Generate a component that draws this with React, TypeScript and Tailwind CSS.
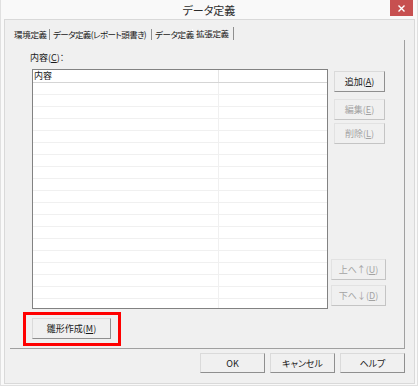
import React from 'react'

const font = "font-['Noto_Sans_CJK_JP','Noto_Sans',sans-serif] [font-feature-settings:'palt']"

function Btn({
  children,
  disabled,
  className = '',
}: {
  children: React.ReactNode
  disabled?: boolean
  className?: string
}) {
  const tone = disabled
    ? 'border-t-[#e2e2e2] border-l-[#e2e2e2] border-r-[#c4c4c4] border-b-[#c4c4c4] text-[#a3a3a3]'
    : 'border-t-[#dadada] border-l-[#dadada] border-r-[#8f8f8f] border-b-[#8f8f8f] text-[#1a1a1a]'
  return (
    <div
      className={`flex items-center justify-center border bg-[#f0f0f0] text-[9px] leading-none ${tone} ${className}`}
    >
      {children}
    </div>
  )
}

const rows = Array.from({ length: 19 })

export default function App() {
  return (
    <div
      className={`relative w-[418px] h-[386px] bg-[#f9f9f9] border-l border-r border-b border-[#e0e0e0] flex flex-col ${font}`}
    >
      {/* title bar */}
      <div className="h-[19px] flex items-center justify-center text-[11px] text-[#2b2b2b] leading-none pt-[2px]">
        データ定義
      </div>
      <div className="absolute right-[4px] top-0 w-[23px] h-[16px] bg-[#c75050] flex items-center justify-center">
        <svg width="7" height="7" viewBox="0 0 7 7">
          <path d="M0.5 0.5 L6.5 6.5 M6.5 0.5 L0.5 6.5" stroke="#fff" strokeWidth="1.4" />
        </svg>
      </div>

      {/* client area */}
      <div className="ml-[3px] w-[411px] h-[365px] border border-[#d9d9d9] bg-[#f0f0f0] flex flex-col">
        {/* tabs */}
        <div className="h-[20px] pl-[5px] flex items-end text-[8.5px] text-[#1a1a1a] leading-none">
          <div className="w-[40px] h-[11px] pl-[4px] border-r border-[#8f8f8f] flex items-center whitespace-nowrap tracking-[-0.3px]">
            環境定義
          </div>
          <div className="w-[102px] h-[11px] pl-[3px] border-r border-[#8f8f8f] flex items-center whitespace-nowrap tracking-[-0.6px]">
            データ定義(レポート頭書き)
          </div>
          <div className="w-[41px] h-[11px] pl-[3px] border-r border-white flex items-center whitespace-nowrap tracking-[-0.4px]">
            データ定義
          </div>
          <div className="w-[41px] h-[13px] pl-[3px] pb-[1px] border-r border-[#8f8f8f] flex items-center whitespace-nowrap tracking-[-0.3px]">
            拡張定義
          </div>
        </div>

        {/* tab panel */}
        <div className="ml-[5px] w-[395px] h-[309px] border-r border-b border-[#a0a0a0] flex flex-col">
          <div className="flex pl-[20px]">
            <div className="flex flex-col">
              <div className="h-[12px] mt-[12px] mb-[5px] text-[9px] leading-[12px] text-[#1a1a1a]">
                内容(<span className="underline">C</span>)：
              </div>
              <div className="ml-[2px] w-[296px] h-[240px] border border-[#828282] bg-white overflow-hidden">
                <div className="h-[13px] flex border-b border-[#d5d5d5] text-[9px] leading-[12px] text-[#1a1a1a]">
                  <div className="w-[186px] pl-[1px] border-r border-[#e5e5e5]">内容</div>
                  <div className="flex-1" />
                </div>
                {rows.map((_, i) => (
                  <div key={i} className="h-[12px] flex border-b border-[#f0f0f0]">
                    <div className="w-[186px] border-r border-[#f0f0f0]" />
                  </div>
                ))}
              </div>
            </div>

            <div className="ml-[3px] w-[55px] flex flex-col">
              <Btn className="mt-[31px] ml-[3px] w-[51px] h-[21px]">
                追加(<span className="underline">A</span>)
              </Btn>
              <Btn disabled className="mt-[7px] ml-[3px] w-[51px] h-[21px]">
                編集(<span className="underline">E</span>)
              </Btn>
              <Btn disabled className="mt-[3px] ml-[3px] w-[51px] h-[21px]">
                削除(<span className="underline">L</span>)
              </Btn>
              <Btn disabled className="mt-[115px] w-[55px] h-[21px]">
                上へ↑(<span className="underline">U</span>)
              </Btn>
              <Btn disabled className="mt-[5px] w-[55px] h-[21px]">
                下へ↓(<span className="underline">D</span>)
              </Btn>
            </div>
          </div>

          <div className="mt-[3px] ml-[13px] w-[98px] h-[34px] border-[3px] border-[#ff0000] pl-[6px] pt-[3px]">
            <Btn className="w-[79px] h-[21px]">
              雛形作成(<span className="underline">M</span>)
            </Btn>
          </div>
        </div>

        {/* dialog buttons */}
        <div className="mt-[4px] pr-[9px] flex justify-end gap-[5px]">
          <Btn className="w-[65px] h-[20px] border-[#7a7a7a]">OK</Btn>
          <Btn className="w-[65px] h-[20px]">キャンセル</Btn>
          <Btn className="w-[65px] h-[20px]">ヘルプ</Btn>
        </div>
      </div>
    </div>
  )
}
